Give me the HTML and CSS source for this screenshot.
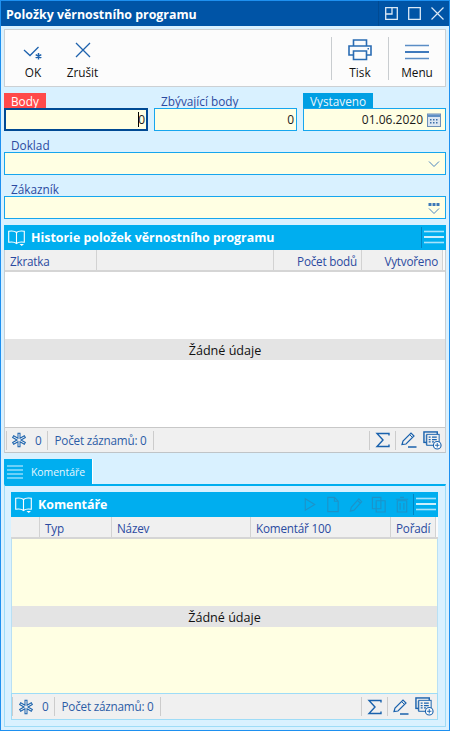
FILE: index.html
```html
<!DOCTYPE html>
<html lang="cs">
<head>
<meta charset="utf-8">
<title>Položky věrnostního programu</title>
<link rel="stylesheet" href="styles.css">
</head>
<body>
<svg class="defs" width="0" height="0" aria-hidden="true">
  <symbol id="snow" viewBox="0 0 18 18"><g fill="none" stroke-linecap="square"><g stroke="#1a62ad" stroke-width="3.400"><path d="M9 2.500v13M3.400 5.750l11.200 6.500M14.600 5.750L3.400 12.250"/></g><g stroke="#f0f0f0" stroke-width="1.200"><path d="M9 2.500v13M3.400 5.750l11.200 6.500M14.600 5.750L3.400 12.250"/></g></g></symbol>
  <symbol id="sum" viewBox="0 0 16 16"><path d="M14 3.500V1.500H2L8 8 2 14.500h12v-2" fill="none" stroke="currentColor" stroke-width="1.400"/></symbol>
  <symbol id="pen" viewBox="0 0 16 16"><g fill="none" stroke="currentColor"><path d="M1 12.500L2 9 10 1l3 3-8 8z" stroke-width="1.200"/><path d="M8.500 2.500l3 3"/><path d="M7 15h8.500" stroke-width="1.500"/></g></symbol>
  <symbol id="addrec" viewBox="0 0 20 20"><g fill="none" stroke="currentColor"><rect x="1" y="1" width="14" height="11" stroke-width="1.500"/><path d="M3.500 4v10.500H11"/><rect x="4" y="3.500" width="13" height="11.500" fill="#f0f0f0"/><path d="M6 6.500h2M9.500 6.500h5M6 9h2M9.500 9h5M6 11.500h2M9.500 11.500h2" stroke-width="1.300"/><circle cx="15" cy="15" r="4" fill="#fff" stroke-width="1.200"/><path d="M12.700 15h4.600M15 12.700v4.600"/></g></symbol>
  <symbol id="book" viewBox="0 0 17 16"><g fill="none" stroke="#fff" stroke-width="1.100"><path d="M8.500 2.500C7 1 3.500.8.700 1.200v11c2.800-.4 6.300-.2 7.800 1.300 1.500-1.500 5-1.700 7.800-1.300v-11C13.500.8 10 1 8.500 2.500zM8.500 2.500v11"/></g><path d="M11.500 14h4.500l-2.250 2z" fill="#fff"/></symbol>
  <symbol id="burger" viewBox="0 0 20 14"><g fill="none"><path d="M0 1.500h20" stroke="#a8e3fb" stroke-width="1.600"/><path d="M0 7h20" stroke="#fff" stroke-width="1.600"/><path d="M0 12.500h20" stroke="#a8e3fb" stroke-width="1.600"/></g></symbol>
</svg>
<div class="window">
  <header class="titlebar">
    <span class="title">Položky věrnostního programu</span>
    <span class="winbtns">
      <svg class="winicon" viewBox="0 0 13 13"><path d="M.700.700h11.600v11.600H.700zM7 .700V7H.700" fill="none" stroke="#dbe9f6" stroke-width="1.300"/></svg>
      <svg class="winicon" viewBox="0 0 13 13"><path d="M.700.700h11.600v11.600H.700z" fill="none" stroke="#dbe9f6" stroke-width="1.300"/></svg>
      <svg class="winicon" viewBox="0 0 13 13"><path d="M.500.500l12 12M12.500.500l-12 12" fill="none" stroke="#dbe9f6" stroke-width="1.200"/></svg>
    </span>
  </header>

  <div class="content">
    <nav class="toolbar">
      <div class="tool tool-ok">
        <svg class="tool-icon" viewBox="0 0 22 22"><path d="M2 11l6 5.500L16.500 8" fill="none" stroke="#1e62ad" stroke-width="1.300"/><path d="M16.500 14v6.500M13.700 15.600l5.600 3.300M19.300 15.600l-5.600 3.300" stroke="#1e62ad" stroke-width="1.500"/></svg>
        <span>OK</span>
      </div>
      <div class="tool tool-cancel">
        <svg class="tool-icon" viewBox="0 0 22 22"><path d="M4 4l14 14M18 4L4 18" fill="none" stroke="#1e62ad" stroke-width="1.300"/></svg>
        <span>Zrušit</span>
      </div>
      <div class="tool-space"></div>
      <div class="tool tool-sep tool-print">
        <svg class="tool-icon print-icon" viewBox="0 0 24 22"><g fill="none" stroke="#2a6cb3" stroke-width="1.600"><path d="M5.500 7V1h13v6"/><path d="M5.500 16H1V7h22v9h-4.500"/><path d="M5.500 12h13v8.500h-13z"/></g><path d="M19.500 9h1.500v1.500h-1.500z" fill="#2a6cb3"/></svg>
        <span>Tisk</span>
      </div>
      <div class="tool tool-sep tool-menu">
        <svg class="tool-icon menu-icon" viewBox="0 0 24 16"><path d="M0 1.500h24M0 14.500h24" stroke="#5a8dc5" stroke-width="1.600"/><path d="M0 8h24" stroke="#1059ab" stroke-width="1.600"/></svg>
        <span>Menu</span>
      </div>
    </nav>

    <div class="form-row">
      <div class="field">
        <span class="label label-red">Body</span>
        <div class="input input-active"><span class="caret"></span><span>0</span></div>
      </div>
      <div class="field">
        <span class="label label-plain">Zbývající body</span>
        <div class="input"><span>0</span></div>
      </div>
      <div class="field">
        <span class="label label-blue">Vystaveno</span>
        <div class="input"><span>01.06.2020</span>
          <svg class="cal" viewBox="0 0 14 14"><rect x=".5" y="1" width="13" height="12.500" fill="#dbe6f2" stroke="#6c8fb8"/><path d="M1 1.500h12v2.500H1z" fill="#5f8fc4"/><path d="M3 6h1.500v1.500H3zM6 6h1.500v1.500H6zM9 6h1.500v1.500H9zM3 9h1.500v1.500H3zM6 9h1.500v1.500H6zM9 9h1.500v1.500H9z" fill="#3c6ea8"/></svg>
        </div>
      </div>
    </div>

    <div class="field-wide">
      <span class="label label-plain">Doklad</span>
      <div class="input"><svg class="drop" viewBox="0 0 12 8"><path d="M1 1.500l5 5 5-5" fill="none" stroke="#4a84bf" stroke-width="1"/></svg></div>
    </div>
    <div class="field-wide">
      <span class="label label-plain">Zákazník</span>
      <div class="input"><svg class="drop drop-dots" viewBox="0 0 12 12"><path d="M.500 1h3v3h-3zM4.500 1h3v3h-3zM8.500 1h3v3h-3z" fill="#3c78b8"/><path d="M1 6.500l5 5 5-5" fill="none" stroke="#4a84bf" stroke-width="1"/></svg></div>
    </div>

    <section class="grid grid-main">
      <div class="grid-head">
        <svg class="book" viewBox="0 0 17 16"><use href="#book"/></svg>
        <span class="grid-title">Historie položek věrnostního programu</span>
        <span class="burger-wrap"><svg class="burger" viewBox="0 0 20 14"><use href="#burger"/></svg></span>
      </div>
      <div class="cols cols-main">
        <span class="col">Zkratka</span><span class="col"></span><span class="col col-r">Počet bodů</span><span class="col col-r">Vytvořeno</span>
      </div>
      <div class="grid-body body-white"><div class="empty">Žádné údaje</div></div>
      <div class="foot">
        <svg class="snow" viewBox="0 0 18 18"><use href="#snow"/></svg>
        <span class="foot-count">0</span>
        <span class="foot-rec">Počet záznamů: 0</span>
        <span class="foot-space"></span>
        <span class="foot-btn"><svg class="fi" viewBox="0 0 16 16"><use href="#sum"/></svg></span>
        <span class="foot-btn"><svg class="fi" viewBox="0 0 16 16"><use href="#pen"/></svg></span>
        <svg class="fi-add" viewBox="0 0 20 20"><use href="#addrec"/></svg>
      </div>
    </section>

    <div class="tabs">
      <div class="tab">
        <svg class="tab-icon" viewBox="0 0 16 14"><path d="M0 1h16M0 5h16M0 9h16M0 13h16" stroke="#8fdcfb" stroke-width="1.500"/></svg>
        <span>Komentáře</span>
      </div>
    </div>
    <div class="tabpage">
      <section class="grid grid-inner">
        <div class="grid-head">
          <svg class="book" viewBox="0 0 17 16"><use href="#book"/></svg>
          <span class="grid-title">Komentáře</span>
          <span class="ghosts">
            <svg viewBox="0 0 16 18"><path d="M3 3l10 6-10 6z" fill="none" stroke="#1c93c9" stroke-width="1.200"/></svg>
            <svg viewBox="0 0 16 18"><path d="M2.500 1.500h7l4 4v11h-11zM9.500 1.500v4h4" fill="none" stroke="#1c93c9" stroke-width="1.200"/></svg>
            <svg viewBox="0 0 16 18"><path d="M2 16l1-4 8-9 3 3-8 9zM9.500 4.500l3 3" fill="none" stroke="#1c93c9" stroke-width="1.200"/></svg>
            <svg viewBox="0 0 16 18"><path d="M1 1.500h9v12H1zM5 5h9.500v12H5z" fill="none" stroke="#1c93c9" stroke-width="1.200"/></svg>
            <svg viewBox="0 0 16 18"><path d="M3 5h10v12H3zM1.500 3.500h13M6 1.500h4M6 7.500v7M10 7.500v7" fill="none" stroke="#1c93c9" stroke-width="1.200"/></svg>
          </span>
          <span class="burger-wrap"><svg class="burger" viewBox="0 0 20 14"><use href="#burger"/></svg></span>
        </div>
        <div class="cols cols-inner">
          <span class="col"></span><span class="col">Typ</span><span class="col">Název</span><span class="col">Komentář 100</span><span class="col">Pořadí</span>
        </div>
        <div class="grid-body body-yellow"><div class="empty">Žádné údaje</div></div>
        <div class="foot foot-inner">
          <svg class="snow" viewBox="0 0 18 18"><use href="#snow"/></svg>
          <span class="foot-count">0</span>
          <span class="foot-rec">Počet záznamů: 0</span>
          <span class="foot-space"></span>
          <span class="foot-btn"><svg class="fi" viewBox="0 0 16 16"><use href="#sum"/></svg></span>
          <span class="foot-btn"><svg class="fi" viewBox="0 0 16 16"><use href="#pen"/></svg></span>
          <svg class="fi-add" viewBox="0 0 20 20"><use href="#addrec"/></svg>
        </div>
      </section>
    </div>
  </div>
</div>
</body>
</html>
```
FILE: styles.css
```css
* { box-sizing: border-box; }
html, body { margin: 0; padding: 0; }
body { width: 450px; height: 731px; overflow: hidden; font-family: "Open Sans", "Noto Sans", sans-serif; font-size: 12px; color: #1a1a1a; }
.defs { position: absolute; }
.window { width: 450px; height: 731px; display: flex; flex-direction: column; background: #d9f1ff; border: 1px solid #1e90f0; }
.titlebar { height: 25px; flex: none; background: #0054a6; display: flex; align-items: center; justify-content: space-between; padding: 0 5px 0 5px; color: #fff; }
.title { font-weight: 700; font-size: 12.4px; padding-top: 1px; }
.winbtns { display: flex; gap: 10px; padding-left: 6px; border-left: 1px solid #004a93; height: 100%; align-items: center; }
.winicon { width: 13px; height: 13px; }
.content { flex: 1; display: flex; flex-direction: column; padding: 3px 3px 0 3px; }

.toolbar { height: 58px; flex: none; display: flex; background: #fcfcfc; border: 1px solid #ccd0d3; padding: 7px 0 6px 0; }
.tool { display: flex; flex-direction: column; align-items: center; justify-content: flex-end; font-size: 11.8px; line-height: 16px; color: #111; }
.tool-icon { width: 22px; height: 22px; margin-bottom: 3px; }
.tool-ok { width: 56px; }
.tool-cancel { width: 43px; }
.tool-space { flex: 1; }
.tool-sep { border-left: 1px solid #c9cdd0; }
.tool-print { width: 57px; }
.tool-menu { width: 57px; }
.print-icon { width: 24px; height: 22px; }
.menu-icon { width: 24px; height: 16px; margin-bottom: 4px; }

.form-row { display: grid; grid-template-columns: 144px 143px 143px; gap: 6px; margin-top: 6px; }
.field { display: flex; flex-direction: column; align-items: flex-start; }
.label { height: 15px; line-height: 16px; padding: 0 7px; color: #2b4aa0; font-size: 11.8px; }
.label-red { background: #ff4a4a; color: #fff; }
.label-blue { background: #009fe3; color: #e8f6fd; }
.input { width: 100%; height: 23px; background: #ffffe3; border: 1px solid #16a6ee; display: flex; align-items: center; justify-content: flex-end; padding: 0 2px 0 0; color: #1a1a1a; font-size: 12px; }
.input-active { border: 2px solid #004a94; padding-right: 1px; }
.caret { width: 1px; height: 15px; background: #000; margin-right: -1px; }
.cal { width: 14px; height: 14px; margin-left: 4px; margin-right: 2px; }
.field-wide { margin-top: 6px; height: 38px; }
.field-wide .label { display: block; height: 15px; }
.drop { width: 12px; height: 8px; margin-right: 3px; }
.drop-dots { height: 12px; }

.grid { display: flex; flex-direction: column; }
.grid-main { height: 228px; margin-top: 6px; flex: none; border-left: 1px solid #c8ced2; border-right: 1px solid #c8ced2; border-bottom: 1px solid #bfc4c7; }
.grid-head { height: 25px; flex: none; background: #00aeef; display: flex; align-items: center; color: #fff; margin: 0 -1px; }
.book { width: 17px; height: 16px; margin-left: 4px; margin-right: 6px; flex: none; }
.grid-title { font-weight: 700; font-size: 12.4px; white-space: nowrap; }
.burger-wrap { margin-left: auto; height: 21px; border-left: 1px solid #0086c4; padding: 3px 2px 0 2px; display: flex; flex: none; }
.burger { width: 20px; height: 14px; }
.cols { height: 22px; flex: none; display: grid; background: #fbfbfb; border-bottom: 2px solid #d5d5d5; color: #2b4aa0; font-size: 11.7px; letter-spacing: -.2px; line-height: 22px; }
.col { background: #f0f0f0; border-right: 1px solid #d2d2d2; padding: 0 4px 0 5px; overflow: hidden; white-space: nowrap; }
.col-r { text-align: right; }
.cols-main { grid-template-columns: 92px 177px 88px 81px; }
.cols-inner { grid-template-columns: 29px 72px 139px 140px 45px; }
.grid-body { flex: 1; display: flex; align-items: center; justify-content: center; flex-direction: column; }
.body-white { background: #fff; }
.body-yellow { background: #ffffe3; border-left: 1px solid #b9e0f4; border-right: 1px solid #b9e0f4; }
.empty { width: 100%; height: 21px; padding-top: 1px; line-height: 21px; background: #e4e4e4; text-align: center; font-size: 12.6px; color: #111; }
.foot { height: 25px; flex: none; background: #f0f0f0; border-top: 1px solid #c8c8c8; display: flex; align-items: center; color: #2c5ca6; font-size: 11.7px; letter-spacing: -.2px; }
.foot::before { content: ""; width: 1px; height: 19px; background: #ccc; margin: 0 4px 0 1px; flex: none; }
.foot-inner { height: 26px; border-top: 1px solid #9edcf7; border-left: 1px solid #9edcf7; border-right: 1px solid #9edcf7; }
.foot-inner::before { margin: 0 5px 0 0; }
.snow { width: 16px; height: 16px; flex: none; }
.foot-count { padding: 0 6px 0 8px; border-right: 1px solid #ccc; height: 19px; line-height: 18px; }
.foot-rec { padding: 0 6px; border-right: 1px solid #ccc; height: 19px; line-height: 18px; white-space: nowrap; }
.foot-space { flex: 1; }
.foot-btn { width: 26px; height: 19px; border-left: 1px solid #ccc; display: flex; align-items: center; justify-content: center; flex: none; color: #1a62ad; }
.fi { width: 16px; height: 16px; }
.fi-add { width: 19px; height: 19px; color: #1a62ad; margin: 0 3px 0 2px; flex: none; }

.tabs { display: flex; margin-top: 6px; flex: none; height: 25px; }
.tab { width: 89px; height: 25px; background: #00aeef; display: flex; align-items: center; color: #e6f7fe; font-size: 10.4px; padding-left: 3px; border-right: 1px solid #fff; }
.tab-icon { width: 16px; height: 14px; margin-right: 8px; }
.tabpage { flex: 1; margin-bottom: 3px; border: 1px solid #9edcf7; border-top: 2px solid #00aeef; padding: 6px 7px 6px 6px; display: flex; flex-direction: column; }
.grid-inner { flex: 1; border-bottom: 1px solid #9edcf7; }
.grid-inner .grid-head { margin: 0; }
.ghosts { margin-left: auto; display: flex; align-items: center; }
.ghosts svg { width: 16px; height: 17px; margin-left: 7px; }
.ghosts + .burger-wrap { margin-left: 3px; }
```
